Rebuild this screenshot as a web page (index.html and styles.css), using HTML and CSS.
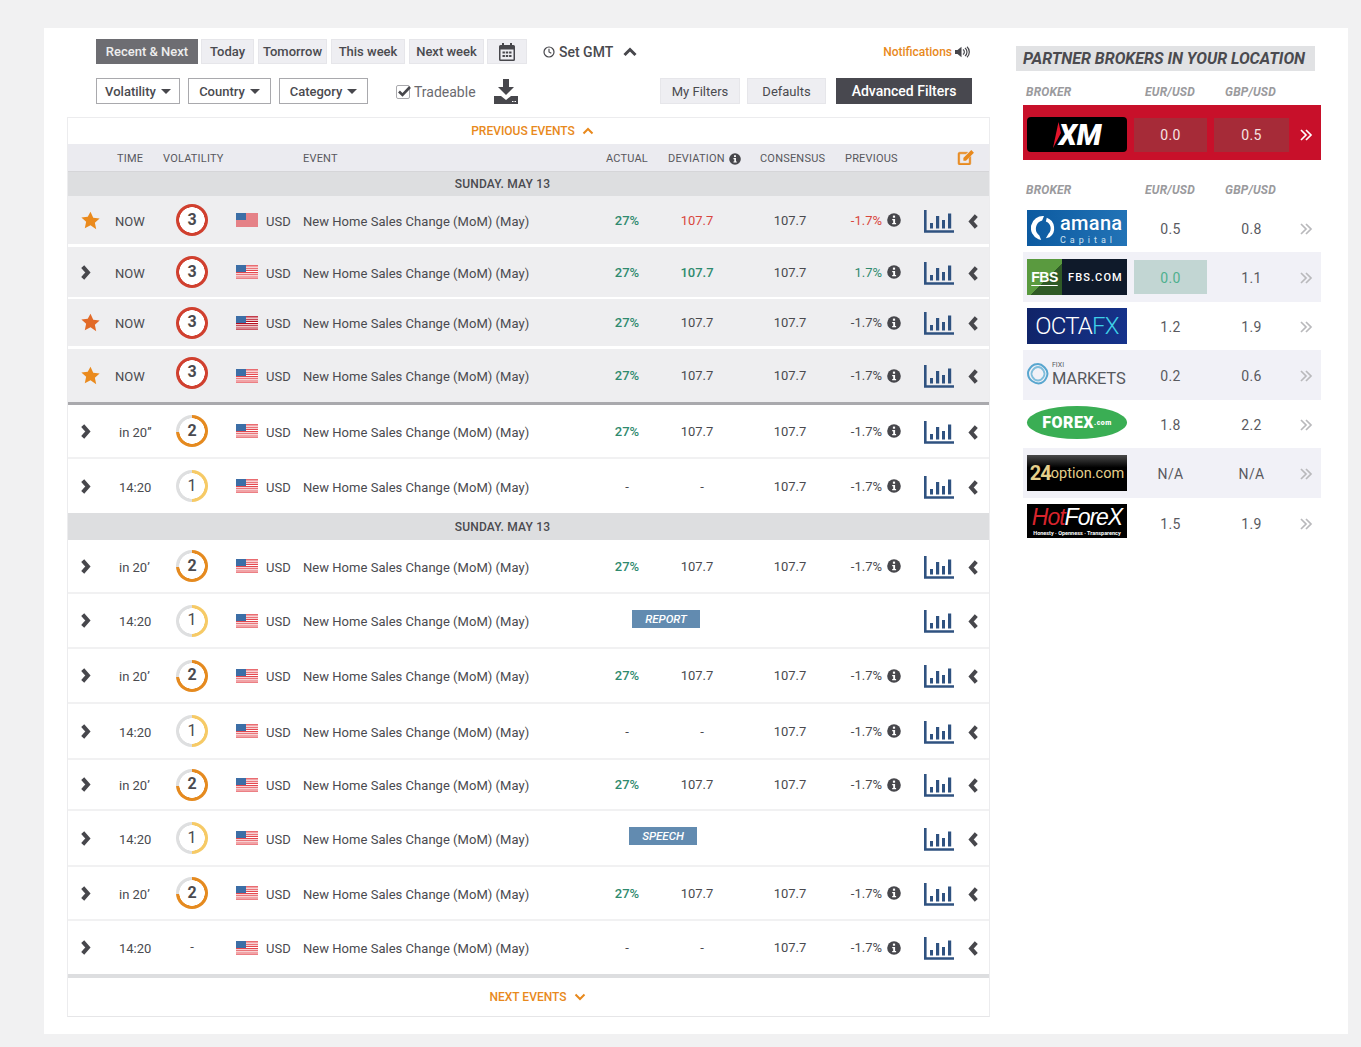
FILE: index.html
```html
<!DOCTYPE html>
<html lang="en">
<head>
    <meta charset="UTF-8">
    <meta name="viewport" content="width=device-width, initial-scale=1.0">
    <title>Economic Calendar</title>
    <link rel="stylesheet" href="styles.css">
</head>
<body>
    <svg class="sprites" aria-hidden="true">
        <symbol id="star" viewBox="0 0 20 20"><path d="M10 .8l2.9 6.2 6.7.8-5 4.6 1.4 6.7L10 15l-6 3.1 1.4-6.7-5-4.6 6.7-.8z"/></symbol>
        <symbol id="next" viewBox="0 0 10 14"><path d="M2.400 1.600L7.200 7l-4.800 5.400" fill="none" stroke="currentColor" stroke-width="3.800"/></symbol>
        <symbol id="back" viewBox="0 0 10 14"><path d="M7.600 1.600L2.800 7l4.800 5.400" fill="none" stroke="currentColor" stroke-width="3.800"/></symbol>
        <symbol id="flag" viewBox="0 0 22 14">
            <rect width="22" height="14" fill="#fff"/>
            <path d="M0 1h22M0 3.200h22M0 5.400h22M0 7.600h22M0 9.800h22M0 12h22" stroke="currentColor" stroke-width="1.100"/>
            <rect y="0" width="22" height=".6" fill="currentColor"/>
            <rect y="13.300" width="22" height=".7" fill="currentColor"/>
            <rect width="10" height="7" fill="#3c6ea6"/>
        </symbol>
        <symbol id="flag-flat" viewBox="0 0 22 14">
            <rect width="22" height="14" fill="#e58187"/>
            <rect width="10" height="7" fill="#3c6ea6"/>
        </symbol>
        <symbol id="info" viewBox="0 0 14 14">
            <circle cx="7" cy="7" r="6.800" fill="#47474c"/>
            <rect x="5.900" y="2.600" width="2.200" height="2.100" fill="#fff"/>
            <path d="M5.200 5.900h2.900v4h1v1.300H5.200V9.900h1V7.200h-1z" fill="#fff"/>
        </symbol>
        <symbol id="chart" viewBox="0 0 30 23">
            <path d="M1.300 0v21.500h28.700" fill="none" stroke="currentColor" stroke-width="2.600"/>
            <rect x="6" y="13" width="3" height="5.500" fill="currentColor"/>
            <rect x="12" y="6" width="3.200" height="12.500" fill="currentColor"/>
            <rect x="18" y="10" width="3" height="8.500" fill="currentColor"/>
            <rect x="24" y="3.500" width="3.200" height="15" fill="currentColor"/>
        </symbol>
        <symbol id="more" viewBox="0 0 14 14">
            <path d="M2 2l5 5-5 5M7 2l5 5-5 5" fill="none" stroke="currentColor" stroke-width="1.700"/>
        </symbol>
    </svg>

    <div class="panel">
        <main class="calendar">
            <div class="toolbar toolbar-top">
                <a class="tab tab-recent active">Recent &amp; Next</a>
                <a class="tab tab-today">Today</a>
                <a class="tab tab-tomorrow">Tomorrow</a>
                <a class="tab tab-thisweek">This week</a>
                <a class="tab tab-nextweek">Next week</a>
                <a class="tab tab-date">
                    <svg class="icon-cal" viewBox="0 0 18 20">
                        <path d="M1 4.500a1.500 1.500 0 0 1 1.500-1.500H4V1h2v2h6V1h2v2h1.500A1.500 1.500 0 0 1 17 4.500v13a1.500 1.500 0 0 1-1.500 1.500h-13A1.500 1.500 0 0 1 1 17.500zM2.500 7.500v10h13v-10z" fill="#47474c" fill-rule="evenodd"/>
                        <path d="M4.500 9.500h2.400v2H4.500zM7.800 9.500h2.400v2H7.800zM11.100 9.500h2.400v2h-2.400zM4.500 13h2.400v2H4.500zM7.800 13h2.400v2H7.800zM11.100 13h2.400v2h-2.400z" fill="#47474c"/>
                    </svg>
                </a>
                <span class="gmt">
                    <svg class="icon-clock" viewBox="0 0 12 12"><circle cx="6" cy="6" r="5" fill="none" stroke="#47474c" stroke-width="1.200"/><path d="M6 2.800V6l2.300 1.300" fill="none" stroke="#47474c" stroke-width="1.100"/></svg>
                    Set GMT
                    <svg class="icon-up" viewBox="0 0 14 10"><path d="M1.500 8L7 2.500 12.500 8" fill="none" stroke="#47474c" stroke-width="3"/></svg>
                </span>
                <a class="notify">Notifications
                    <svg class="icon-sound" viewBox="0 0 15 12">
                        <path d="M0 4h2.500L6.500.8v10.400L2.500 8H0z" fill="#47474c"/>
                        <path d="M8 3.500a3 3 0 0 1 0 5M10 2a5 5 0 0 1 0 8M12 .8a7 7 0 0 1 0 10.400" fill="none" stroke="#47474c" stroke-width="1.200"/>
                    </svg>
                </a>
            </div>

            <div class="toolbar toolbar-filters">
                <a class="drop drop-vol">Volatility<i class="caret"></i></a>
                <a class="drop drop-country">Country<i class="caret"></i></a>
                <a class="drop drop-cat">Category<i class="caret"></i></a>
                <label class="tradeable">
                    <svg class="icon-check" viewBox="0 0 16 15">
                        <rect x=".5" y="1.500" width="13" height="13" rx="1.500" fill="#fff" stroke="#a9a9ad"/>
                        <path d="M3 7.500l3.500 3.500L14 3" fill="none" stroke="#47474c" stroke-width="2.600"/>
                    </svg>
                    <span>Tradeable</span>
                </label>
                <svg class="icon-download" viewBox="0 0 24 25">
                    <path d="M9 0h6v8h5l-8 8-8-8h5z" fill="#47474c"/>
                    <path d="M0 17h7l5 4 5-4h7v8H0z" fill="#47474c"/>
                    <path d="M18 22h1.500v1H18zM20.500 22H22v1h-1.500z" fill="#fff"/>
                </svg>
                <a class="btn btn-myfilters">My Filters</a>
                <a class="btn btn-defaults">Defaults</a>
                <a class="btn btn-advanced">Advanced Filters</a>
            </div>

            <section class="events">
                <a class="pager pager-prev">PREVIOUS EVENTS
                    <svg class="icon-pager" viewBox="0 0 12 8"><path d="M1.500 6.500L6 2l4.500 4.500" fill="none" stroke="currentColor" stroke-width="2"/></svg>
                </a>

                <div class="row head">
                    <span class="head-time">TIME</span>
                    <span class="head-vol">VOLATILITY</span>
                    <span class="head-event">EVENT</span>
                    <span class="head-actual">ACTUAL</span>
                    <span class="head-dev">DEVIATION <svg class="info-small"><use href="#info"/></svg></span>
                    <span class="head-cons">CONSENSUS</span>
                    <span class="head-prev">PREVIOUS</span>
                    <svg class="head-edit" viewBox="0 0 17 15">
                        <path d="M1 4.500A1.500 1.500 0 0 1 2.500 3H10L8.500 4.500H2.500v9h9V8.500L13 7v6.500a1.500 1.500 0 0 1-1.500 1.500h-9A1.500 1.500 0 0 1 1 13.500z" fill="currentColor" stroke="currentColor" stroke-width=".5"/>
                        <path d="M6 8.500L13.500 1l2.500 2.500L8.500 11H6z" fill="currentColor"/>
                    </svg>
                </div>

                <div class="date">SUNDAY. MAY 13</div>

                <div class="row row-now">
                    <span class="c-mark"><svg class="star"><use href="#star"/></svg></span>
                    <span class="c-time">NOW</span>
                    <span class="c-vol"><b class="ring ring-3">3</b></span>
                    <span class="c-flag"><svg class="flag flag-pale"><use href="#flag-flat"/></svg></span>
                    <span class="c-cur">USD</span>
                    <span class="c-event">New Home Sales Change (MoM) (May)</span>
                    <span class="c-val up">27%</span>
                    <span class="c-val down">107.7</span>
                    <span class="c-val">107.7</span>
                    <span class="c-prev down">-1.7%</span>
                    <span class="c-info"><svg class="info"><use href="#info"/></svg></span>
                    <span class="c-chart"><svg class="chart"><use href="#chart"/></svg></span>
                    <span class="c-back"><svg class="back"><use href="#back"/></svg></span>
                </div>
                <div class="row row-now row-thin">
                    <span class="c-mark"><svg class="next"><use href="#next"/></svg></span>
                    <span class="c-time">NOW</span>
                    <span class="c-vol"><b class="ring ring-3">3</b></span>
                    <span class="c-flag"><svg class="flag"><use href="#flag"/></svg></span>
                    <span class="c-cur">USD</span>
                    <span class="c-event">New Home Sales Change (MoM) (May)</span>
                    <span class="c-val up">27%</span>
                    <span class="c-val up">107.7</span>
                    <span class="c-val">107.7</span>
                    <span class="c-prev up">1.7%</span>
                    <span class="c-info"><svg class="info"><use href="#info"/></svg></span>
                    <span class="c-chart"><svg class="chart"><use href="#chart"/></svg></span>
                    <span class="c-back"><svg class="back"><use href="#back"/></svg></span>
                </div>
                <div class="row row-now">
                    <span class="c-mark"><svg class="star star-hot"><use href="#star"/></svg></span>
                    <span class="c-time">NOW</span>
                    <span class="c-vol"><b class="ring ring-3">3</b></span>
                    <span class="c-flag"><svg class="flag flag-dark"><use href="#flag"/></svg></span>
                    <span class="c-cur">USD</span>
                    <span class="c-event">New Home Sales Change (MoM) (May)</span>
                    <span class="c-val up">27%</span>
                    <span class="c-val">107.7</span>
                    <span class="c-val">107.7</span>
                    <span class="c-prev">-1.7%</span>
                    <span class="c-info"><svg class="info"><use href="#info"/></svg></span>
                    <span class="c-chart"><svg class="chart"><use href="#chart"/></svg></span>
                    <span class="c-back"><svg class="back"><use href="#back"/></svg></span>
                </div>
                <div class="row row-now row-divider">
                    <span class="c-mark"><svg class="star"><use href="#star"/></svg></span>
                    <span class="c-time">NOW</span>
                    <span class="c-vol"><b class="ring ring-3 ring-lift">3</b></span>
                    <span class="c-flag"><svg class="flag"><use href="#flag"/></svg></span>
                    <span class="c-cur">USD</span>
                    <span class="c-event">New Home Sales Change (MoM) (May)</span>
                    <span class="c-val up">27%</span>
                    <span class="c-val">107.7</span>
                    <span class="c-val">107.7</span>
                    <span class="c-prev">-1.7%</span>
                    <span class="c-info"><svg class="info"><use href="#info"/></svg></span>
                    <span class="c-chart"><svg class="chart"><use href="#chart"/></svg></span>
                    <span class="c-back"><svg class="back"><use href="#back"/></svg></span>
                </div>
                <div class="row">
                    <span class="c-mark"><svg class="next"><use href="#next"/></svg></span>
                    <span class="c-time c-soon">in 20’’</span>
                    <span class="c-vol"><b class="ring ring-2">2</b></span>
                    <span class="c-flag"><svg class="flag"><use href="#flag"/></svg></span>
                    <span class="c-cur">USD</span>
                    <span class="c-event">New Home Sales Change (MoM) (May)</span>
                    <span class="c-val up">27%</span>
                    <span class="c-val">107.7</span>
                    <span class="c-val">107.7</span>
                    <span class="c-prev">-1.7%</span>
                    <span class="c-info"><svg class="info"><use href="#info"/></svg></span>
                    <span class="c-chart"><svg class="chart"><use href="#chart"/></svg></span>
                    <span class="c-back"><svg class="back"><use href="#back"/></svg></span>
                </div>
                <div class="row row-flush">
                    <span class="c-mark"><svg class="next"><use href="#next"/></svg></span>
                    <span class="c-time c-soon">14:20</span>
                    <span class="c-vol"><b class="ring ring-1">1</b></span>
                    <span class="c-flag"><svg class="flag"><use href="#flag"/></svg></span>
                    <span class="c-cur">USD</span>
                    <span class="c-event">New Home Sales Change (MoM) (May)</span>
                    <span class="c-val">-</span>
                    <span class="c-val c-dash">-</span>
                    <span class="c-val">107.7</span>
                    <span class="c-prev">-1.7%</span>
                    <span class="c-info"><svg class="info"><use href="#info"/></svg></span>
                    <span class="c-chart"><svg class="chart"><use href="#chart"/></svg></span>
                    <span class="c-back"><svg class="back"><use href="#back"/></svg></span>
                </div>

                <div class="date date-low">SUNDAY. MAY 13</div>

                <div class="row">
                    <span class="c-mark"><svg class="next"><use href="#next"/></svg></span>
                    <span class="c-time c-soon">in 20’</span>
                    <span class="c-vol"><b class="ring ring-2">2</b></span>
                    <span class="c-flag"><svg class="flag"><use href="#flag"/></svg></span>
                    <span class="c-cur">USD</span>
                    <span class="c-event">New Home Sales Change (MoM) (May)</span>
                    <span class="c-val up">27%</span>
                    <span class="c-val">107.7</span>
                    <span class="c-val">107.7</span>
                    <span class="c-prev">-1.7%</span>
                    <span class="c-info"><svg class="info"><use href="#info"/></svg></span>
                    <span class="c-chart"><svg class="chart"><use href="#chart"/></svg></span>
                    <span class="c-back"><svg class="back"><use href="#back"/></svg></span>
                </div>
                <div class="row">
                    <span class="c-mark"><svg class="next"><use href="#next"/></svg></span>
                    <span class="c-time c-soon">14:20</span>
                    <span class="c-vol"><b class="ring ring-1">1</b></span>
                    <span class="c-flag"><svg class="flag"><use href="#flag"/></svg></span>
                    <span class="c-cur">USD</span>
                    <span class="c-event">New Home Sales Change (MoM) (May)</span>
                    <span class="c-badge"><em class="badge badge-report">REPORT</em></span>
                    <span class="c-chart"><svg class="chart"><use href="#chart"/></svg></span>
                    <span class="c-back"><svg class="back"><use href="#back"/></svg></span>
                </div>
                <div class="row">
                    <span class="c-mark"><svg class="next"><use href="#next"/></svg></span>
                    <span class="c-time c-soon">in 20’</span>
                    <span class="c-vol"><b class="ring ring-2">2</b></span>
                    <span class="c-flag"><svg class="flag"><use href="#flag"/></svg></span>
                    <span class="c-cur">USD</span>
                    <span class="c-event">New Home Sales Change (MoM) (May)</span>
                    <span class="c-val up">27%</span>
                    <span class="c-val">107.7</span>
                    <span class="c-val">107.7</span>
                    <span class="c-prev">-1.7%</span>
                    <span class="c-info"><svg class="info"><use href="#info"/></svg></span>
                    <span class="c-chart"><svg class="chart"><use href="#chart"/></svg></span>
                    <span class="c-back"><svg class="back"><use href="#back"/></svg></span>
                </div>
                <div class="row">
                    <span class="c-mark"><svg class="next"><use href="#next"/></svg></span>
                    <span class="c-time c-soon">14:20</span>
                    <span class="c-vol"><b class="ring ring-1">1</b></span>
                    <span class="c-flag"><svg class="flag"><use href="#flag"/></svg></span>
                    <span class="c-cur">USD</span>
                    <span class="c-event">New Home Sales Change (MoM) (May)</span>
                    <span class="c-val">-</span>
                    <span class="c-val c-dash">-</span>
                    <span class="c-val">107.7</span>
                    <span class="c-prev">-1.7%</span>
                    <span class="c-info"><svg class="info"><use href="#info"/></svg></span>
                    <span class="c-chart"><svg class="chart"><use href="#chart"/></svg></span>
                    <span class="c-back"><svg class="back"><use href="#back"/></svg></span>
                </div>
                <div class="row">
                    <span class="c-mark"><svg class="next"><use href="#next"/></svg></span>
                    <span class="c-time c-soon">in 20’</span>
                    <span class="c-vol"><b class="ring ring-2">2</b></span>
                    <span class="c-flag"><svg class="flag"><use href="#flag"/></svg></span>
                    <span class="c-cur">USD</span>
                    <span class="c-event">New Home Sales Change (MoM) (May)</span>
                    <span class="c-val up">27%</span>
                    <span class="c-val">107.7</span>
                    <span class="c-val">107.7</span>
                    <span class="c-prev">-1.7%</span>
                    <span class="c-info"><svg class="info"><use href="#info"/></svg></span>
                    <span class="c-chart"><svg class="chart"><use href="#chart"/></svg></span>
                    <span class="c-back"><svg class="back"><use href="#back"/></svg></span>
                </div>
                <div class="row">
                    <span class="c-mark"><svg class="next"><use href="#next"/></svg></span>
                    <span class="c-time c-soon">14:20</span>
                    <span class="c-vol"><b class="ring ring-1">1</b></span>
                    <span class="c-flag"><svg class="flag"><use href="#flag"/></svg></span>
                    <span class="c-cur">USD</span>
                    <span class="c-event">New Home Sales Change (MoM) (May)</span>
                    <span class="c-badge"><em class="badge badge-speech">SPEECH</em></span>
                    <span class="c-chart"><svg class="chart"><use href="#chart"/></svg></span>
                    <span class="c-back"><svg class="back"><use href="#back"/></svg></span>
                </div>
                <div class="row">
                    <span class="c-mark"><svg class="next"><use href="#next"/></svg></span>
                    <span class="c-time c-soon">in 20’</span>
                    <span class="c-vol"><b class="ring ring-2">2</b></span>
                    <span class="c-flag"><svg class="flag"><use href="#flag"/></svg></span>
                    <span class="c-cur">USD</span>
                    <span class="c-event">New Home Sales Change (MoM) (May)</span>
                    <span class="c-val up">27%</span>
                    <span class="c-val">107.7</span>
                    <span class="c-val">107.7</span>
                    <span class="c-prev">-1.7%</span>
                    <span class="c-info"><svg class="info"><use href="#info"/></svg></span>
                    <span class="c-chart"><svg class="chart"><use href="#chart"/></svg></span>
                    <span class="c-back"><svg class="back"><use href="#back"/></svg></span>
                </div>
                <div class="row row-end">
                    <span class="c-mark"><svg class="next"><use href="#next"/></svg></span>
                    <span class="c-time c-soon">14:20</span>
                    <span class="c-vol c-none">-</span>
                    <span class="c-flag"><svg class="flag"><use href="#flag"/></svg></span>
                    <span class="c-cur">USD</span>
                    <span class="c-event">New Home Sales Change (MoM) (May)</span>
                    <span class="c-val">-</span>
                    <span class="c-val c-dash">-</span>
                    <span class="c-val">107.7</span>
                    <span class="c-prev">-1.7%</span>
                    <span class="c-info"><svg class="info"><use href="#info"/></svg></span>
                    <span class="c-chart"><svg class="chart"><use href="#chart"/></svg></span>
                    <span class="c-back"><svg class="back"><use href="#back"/></svg></span>
                </div>

                <a class="pager pager-next">NEXT EVENTS
                    <svg class="icon-pager" viewBox="0 0 12 8"><path d="M1.500 1.500L6 6l4.500-4.500" fill="none" stroke="currentColor" stroke-width="2"/></svg>
                </a>
            </section>
        </main>

        <aside class="brokers">
            <h2 class="brokers-title">PARTNER BROKERS IN YOUR LOCATION</h2>

            <div class="broker-head">
                <span>BROKER</span><span class="center">EUR/USD</span><span class="center">GBP/USD</span>
            </div>
            <div class="broker broker-top">
                <div class="logo logo-xm">
                    <svg class="xm-mark" viewBox="0 0 8 26"><path d="M5.500 0L8 11 0 26z" fill="#e4152b"/></svg>
                    <span>XM</span>
                </div>
                <span class="quote quote-box">0.0</span>
                <span class="quote quote-box">0.5</span>
                <svg class="more"><use href="#more"/></svg>
            </div>

            <div class="broker-head broker-head-low">
                <span>BROKER</span><span class="center">EUR/USD</span><span class="center">GBP/USD</span>
            </div>
            <div class="broker-list">
                <div class="broker">
                    <div class="logo logo-amana">
                        <svg class="amana-mark" viewBox="0 0 28 30">
                            <path d="M14 2A13 13 0 0 0 8 27l3 1-2-5A9 9 0 0 1 12 7z" fill="#fff"/>
                            <path d="M17 4a12 12 0 0 1 3 21l-4 1 3-5a8 8 0 0 0-3-13z" fill="#fff"/>
                        </svg>
                        <span class="amana-text"><b>amana</b><i>Capital</i></span>
                    </div>
                    <span class="quote">0.5</span>
                    <span class="quote">0.8</span>
                    <svg class="more"><use href="#more"/></svg>
                </div>
                <div class="broker">
                    <div class="logo logo-fbs"><b>FBS</b><span>FBS.COM</span></div>
                    <span class="quote quote-best">0.0</span>
                    <span class="quote">1.1</span>
                    <svg class="more"><use href="#more"/></svg>
                </div>
                <div class="broker">
                    <div class="logo logo-octa">OCTA<span>FX</span></div>
                    <span class="quote">1.2</span>
                    <span class="quote">1.9</span>
                    <svg class="more"><use href="#more"/></svg>
                </div>
                <div class="broker">
                    <div class="logo logo-fixi">
                        <svg class="fixi-mark" viewBox="0 0 22 22">
                            <path d="M11 1c4 0 5 2 7 4s3 5 2 8-3 6-6 7-6 0-9-2-4-5-4-8 2-5 4-7 3-2 6-2z" fill="none" stroke="#58a6cf" stroke-width="2"/>
                            <path d="M11 4c3 0 4 1 5.500 3.500s1 5 0 6.500-3 3.500-5.500 3.500-4-1-5.500-3.500-1-5 0-6.500 2.500-3.500 5.500-3.500z" fill="none" stroke="#7fbddb" stroke-width="1.800"/>
                        </svg>
                        <span class="fixi-text"><i>FIXI</i><b>MARKETS</b></span>
                    </div>
                    <span class="quote">0.2</span>
                    <span class="quote">0.6</span>
                    <svg class="more"><use href="#more"/></svg>
                </div>
                <div class="broker">
                    <div class="logo logo-forex">FOREX<span>.com</span></div>
                    <span class="quote">1.8</span>
                    <span class="quote">2.2</span>
                    <svg class="more"><use href="#more"/></svg>
                </div>
                <div class="broker">
                    <div class="logo logo-24"><b>24</b>option.com</div>
                    <span class="quote">N/A</span>
                    <span class="quote">N/A</span>
                    <svg class="more"><use href="#more"/></svg>
                </div>
                <div class="broker">
                    <div class="logo logo-hot">
                        <span class="hot-name"><b>Hot</b>ForeX</span>
                        <span class="hot-tag">Honesty · Openness · Transparency</span>
                    </div>
                    <span class="quote">1.5</span>
                    <span class="quote">1.9</span>
                    <svg class="more"><use href="#more"/></svg>
                </div>
            </div>
        </aside>
    </div>
</body>
</html>
```

FILE: styles.css
```css
* {
    box-sizing: border-box;
}

body {
    margin: 0;
    height: 1047px;
    overflow: hidden;
    background-color: #f1f1f2;
    font-family: Roboto, "Liberation Sans", sans-serif;
    font-size: 13px;
    color: #4a4a4f;
}

.sprites {
    display: none;
}

.panel {
    display: flex;
    width: 1304px;
    height: 1006px;
    margin: 28px 0 0 44px;
    background-color: #fff;
}

.calendar {
    width: 923px;
    margin-left: 23px;
}

/* toolbars */
.toolbar {
    display: flex;
    align-items: center;
    padding: 0 18px 0 29px;
}

.toolbar-top {
    height: 25px;
    margin-top: 11px;
}

.toolbar-filters {
    height: 26px;
    margin-top: 14px;
}

.tab {
    display: flex;
    justify-content: center;
    align-items: center;
    height: 25px;
    margin-right: 4px;
    background-color: #eeeef2;
    border: 1px solid #e6e6ea;
    font-weight: 500;
    color: #4a4a4f;
}

.tab.active {
    background-color: #6d6d72;
    border-color: #6d6d72;
    color: #eeeeee;
}

.tab-recent { width: 102px; margin-right: 3px; }
.tab-today { width: 53px; }
.tab-tomorrow { width: 69px; }
.tab-thisweek { width: 74px; }
.tab-nextweek { width: 75px; margin-right: 3px; }
.tab-date { width: 40px; }

.icon-cal {
    width: 18px;
    height: 20px;
}

.gmt {
    display: flex;
    align-items: center;
    margin-left: 12px;
    font-size: 14px;
    font-weight: 500;
}

.icon-clock {
    width: 12px;
    height: 12px;
    margin-right: 4px;
}

.icon-up {
    width: 14px;
    height: 10px;
    margin-left: 10px;
}

.notify {
    display: flex;
    align-items: center;
    margin: 0 2px 0 auto;
    font-size: 12px;
    font-weight: 500;
    color: #e8891c;
}

.icon-sound {
    width: 15px;
    height: 12px;
    margin-left: 3px;
}

.drop {
    display: flex;
    justify-content: center;
    align-items: center;
    height: 26px;
    margin-right: 8px;
    border: 1px solid #a9a9ad;
    font-weight: 500;
}

.drop-vol { width: 84px; }
.drop-country { width: 83px; }
.drop-cat { width: 89px; }

.caret {
    width: 0;
    height: 0;
    margin-left: 5px;
    border-left: 5px solid transparent;
    border-right: 5px solid transparent;
    border-top: 5px solid #47474c;
}

.tradeable {
    display: flex;
    align-items: center;
    margin-left: 20px;
    font-size: 14px;
    color: #6a6a6f;
}

.tradeable span {
    padding-top: 2px;
}

.icon-check {
    width: 16px;
    height: 15px;
    margin-right: 2px;
}

.icon-download {
    width: 24px;
    height: 25px;
    margin-left: 18px;
}

.btn {
    display: flex;
    justify-content: center;
    align-items: center;
    height: 26px;
    background-color: #eeeef2;
    border: 1px solid #e6e6ea;
}

.btn-myfilters {
    width: 80px;
    margin-left: auto;
}

.btn-defaults {
    width: 79px;
    margin-left: 7px;
}

.btn-advanced {
    width: 136px;
    margin-left: 10px;
    background-color: #48484f;
    border-color: #48484f;
    font-size: 14px;
    font-weight: 500;
    color: #fff;
}

/* events table */
.events {
    display: grid;
    grid-template-rows: 27px 28px 24px 51px 52px 50px 56px 54px 54px 27px 54px 55px 55px 56px 51px 56px 54px 57px 38px;
    margin-top: 13px;
    border-left: 1px solid #ececee;
    border-right: 1px solid #ececee;
    border-bottom: 1px solid #e6e6e8;
}

.pager {
    display: flex;
    justify-content: center;
    align-items: center;
    font-size: 12px;
    font-weight: 500;
    color: #e8891c;
}

.pager-prev {
    padding-left: 8px;
    border-top: 1px solid #ececee;
}

.pager-next {
    padding-left: 18px;
}

.icon-pager {
    width: 12px;
    height: 8px;
    margin-left: 7px;
}

.row {
    display: grid;
    grid-template-columns: 40px 56px 56px 46px 37px 293px 62px 78px 108px 40px 20px 58px 24px;
    align-items: center;
    background-color: #fff;
    border-bottom: 2px solid #f1f1f2;
}

.row-now {
    background-color: #eeeef0;
    border-bottom: 3px solid #fff;
}

.row-thin {
    border-bottom-width: 2px;
}

.row-divider {
    border-bottom: 3px solid #a9a9ad;
}

.row-flush {
    border-bottom: none;
}

.row-end {
    border-bottom: 4px solid #dddee0;
}

.head {
    position: relative;
    padding-top: 2px;
    background-color: #ebebf0;
    border-bottom: 1px solid #d5d5d8;
    font-size: 11px;
    letter-spacing: .2px;
    color: #58585d;
}

.head-time { grid-column: 2; padding-left: 9px; }
.head-vol { grid-column: 3 / span 2; margin-left: -1px; white-space: nowrap; }
.head-event { grid-column: 6; }
.head-actual { grid-column: 7; padding-left: 10px; white-space: nowrap; }
.head-dev { grid-column: 8; padding-left: 10px; white-space: nowrap; display: flex; align-items: center; gap: 4px; }
.head-cons { grid-column: 9; padding-left: 24px; }
.head-prev { grid-column: 10 / span 2; padding-left: 1px; }

.head-edit {
    position: absolute;
    left: 889px;
    top: 5px;
    width: 18px;
    height: 16px;
    color: #e8891c;
}

.info-small {
    flex: none;
    width: 12px;
    height: 12px;
}

.date {
    display: flex;
    justify-content: center;
    align-items: center;
    padding-right: 52px;
    background-color: #dddee0;
    font-size: 12px;
    font-weight: 500;
    letter-spacing: .2px;
}

.date-low {
    padding-top: 1px;
}

.c-mark {
    display: flex;
    justify-content: center;
    padding-left: 2px;
}

.star {
    width: 19px;
    height: 19px;
    margin-left: 3px;
    fill: #ea8a1d;
}

.star-hot {
    fill: #e26a28;
}

.next {
    width: 11px;
    height: 15px;
    margin-right: 8px;
    color: #47474c;
}

.c-time {
    padding-left: 7px;
    white-space: nowrap;
}

.c-soon {
    padding-left: 11px;
}

.c-vol {
    display: flex;
    justify-content: center;
}

.c-none {
    padding-bottom: 2px;
}

.ring {
    display: flex;
    justify-content: center;
    align-items: center;
    width: 32px;
    height: 32px;
    padding-bottom: 1px;
    border-radius: 50%;
    font-size: 16px;
    font-weight: 700;
    line-height: 1;
}

.ring-lift {
    margin-bottom: 6px;
}

.ring-3 {
    background: radial-gradient(circle closest-side, #fff 12.5px, transparent 13px), #d0402f;
}

.ring-2 {
    background: radial-gradient(circle closest-side, #fff 12.5px, transparent 13px), conic-gradient(#e58a1f 0 74%, #dedfe0 74% 100%);
}

.ring-1 {
    font-weight: 400;
    background: radial-gradient(circle closest-side, #fff 12.5px, transparent 13px), conic-gradient(#f6ca66 0 50%, #dedfe0 50% 100%);
}

.c-flag {
    display: flex;
    padding-left: 16px;
}

.flag {
    width: 22px;
    height: 14px;
    color: #e4484f;
}

.flag-dark {
    color: #b30d1f;
}

.c-event,
.c-cur,
.c-time {
    padding-top: 2px;
}

.c-event {
    white-space: nowrap;
    letter-spacing: .03px;
}

.c-val {
    text-align: center;
}

.c-dash {
    padding-left: 10px;
}

.c-prev {
    padding-right: 2px;
    text-align: right;
}

.up {
    font-weight: 500;
    color: #2f8a6e;
}

.down {
    color: #d9463e;
}

.c-prev.up {
    font-weight: 400;
}

.c-val.down {
    font-weight: 400;
}

.c-info {
    display: flex;
    justify-content: center;
}

.info {
    width: 14px;
    height: 14px;
}

.c-chart {
    display: flex;
    padding-left: 20px;
}

.chart {
    width: 30px;
    height: 23px;
    margin-top: 2px;
    color: #2f5280;
}

.c-back {
    display: flex;
    justify-content: center;
}

.back {
    width: 11px;
    height: 15px;
    margin: 2px 2px 0 0;
    color: #47474c;
}

.c-badge {
    grid-column: 7 / span 5;
    padding-bottom: 4px;
}

.badge {
    display: flex;
    justify-content: center;
    align-items: center;
    width: 68px;
    height: 18px;
    background-color: #628bb0;
    font-size: 11.500px;
    font-weight: 500;
    font-style: italic;
    color: #fff;
}

.badge-report {
    margin-left: 36px;
}

.badge-speech {
    margin-left: 33px;
}

/* brokers column */
.brokers {
    width: 305px;
    margin-left: 26px;
    padding-top: 18px;
}

.brokers-title {
    display: flex;
    align-items: center;
    width: 299px;
    height: 25px;
    margin: 0;
    padding-left: 7px;
    background-color: #e1e2e4;
    font-size: 16px;
    font-weight: 700;
    font-style: italic;
    white-space: nowrap;
}

.broker-head {
    display: grid;
    grid-template-columns: 104px 80px 81px;
    width: 298px;
    height: 34px;
    margin-left: 7px;
    padding: 14px 0 0 3px;
    font-size: 12px;
    font-weight: 700;
    font-style: italic;
    letter-spacing: .2px;
    color: #9a9a9d;
}

.broker-head-low {
    height: 43px;
    padding-top: 23px;
}

.broker-head .center {
    text-align: center;
}

.broker {
    display: grid;
    grid-template-columns: 100px 73px 75px 32px;
    column-gap: 7px;
    align-items: center;
    width: 298px;
    margin-left: 7px;
    padding-left: 4px;
    font-size: 14px;
}

.broker-top {
    height: 55px;
    padding-top: 4px;
    background-color: #c8102a;
    color: #fff;
}

.broker-list {
    display: grid;
    grid-template-rows: 49px 50px 48px 50px 48px 50px 49px;
}

.broker-list .broker:nth-child(even) {
    background-color: #f1f1f7;
}

.quote {
    display: flex;
    justify-content: center;
    align-items: center;
    height: 34px;
    letter-spacing: .3px;
    color: #5a5a5f;
}

.broker-list .quote {
    padding-top: 2px;
}

.quote-box {
    background-color: #a62b38;
    color: #f4e4e4;
}

.quote-best {
    background-color: #c2d6d3;
    color: #4fb08e;
}

.more {
    justify-self: center;
    width: 14px;
    height: 14px;
    margin-left: -12px;
    color: #b9b9bc;
}

.broker-list .more {
    margin-top: 2px;
}

.broker-top .more {
    color: #fff;
}

/* logos, drawn as boxes with real text */
.logo {
    display: flex;
    align-items: center;
    width: 100px;
    height: 36px;
    overflow: hidden;
    white-space: nowrap;
}

.logo-xm {
    justify-content: center;
    height: 35px;
    background-color: #000;
    border-radius: 4px;
    font-size: 29px;
    font-weight: 900;
    font-style: italic;
    letter-spacing: 0;
    color: #fff;
}

.xm-mark {
    width: 8px;
    height: 26px;
    margin-right: -2px;
}

.logo-amana {
    padding-left: 4px;
    background: linear-gradient(90deg, #0c5aa0, #2273b6);
    color: #fff;
}

.amana-mark {
    flex: none;
    width: 26px;
    height: 28px;
}

.amana-text {
    display: flex;
    flex-direction: column;
    margin-left: 3px;
}

.amana-text b {
    font-size: 20px;
    font-weight: 500;
    letter-spacing: .3px;
}

.amana-text i {
    font-size: 9px;
    font-style: normal;
    letter-spacing: 4px;
    color: #cfe2f2;
}

.logo-fbs {
    background-color: #0f1a2a;
    color: #fff;
}

.logo-fbs b {
    display: flex;
    justify-content: center;
    align-items: center;
    flex: none;
    width: 35px;
    height: 36px;
    background: linear-gradient(135deg, #5a9a3f 55%, #2f5a26 55%);
    font-family: "Liberation Sans", sans-serif;
    font-size: 14px;
    text-decoration: underline;
    text-underline-offset: 3px;
    letter-spacing: -.5px;
}

.logo-fbs span {
    margin-left: 6px;
    font-size: 11px;
    font-weight: 500;
    letter-spacing: 1.100px;
}

.logo-octa {
    justify-content: center;
    background: linear-gradient(100deg, #102468, #16338c);
    font-size: 24px;
    font-weight: 300;
    letter-spacing: -.8px;
    color: #fff;
}

.logo-octa span {
    color: #3fd0e8;
}

.logo-fixi {
    margin-bottom: 2px;
}

.fixi-mark {
    flex: none;
    width: 22px;
    height: 22px;
}

.fixi-text {
    display: flex;
    flex-direction: column;
    margin-left: 3px;
    color: #56595e;
}

.fixi-text i {
    font-size: 7px;
    font-style: normal;
}

.fixi-text b {
    font-size: 16.500px;
    font-weight: 400;
    letter-spacing: -.2px;
}

.logo-forex {
    justify-content: center;
    height: 33px;
    margin-bottom: 3px;
    background-color: #3aae54;
    border-radius: 50%;
    font-size: 16px;
    font-weight: 900;
    letter-spacing: .5px;
    color: #fff;
}

.logo-forex span {
    font-size: 7px;
}

.logo-24 {
    justify-content: center;
    background: linear-gradient(#4a4a4a, #000 35%);
    font-size: 14.500px;
    color: #e4cf8c;
}

.logo-24 b {
    font-size: 20px;
    letter-spacing: -1px;
}

.logo-hot {
    flex-direction: column;
    height: 34px;
    margin-bottom: 4px;
    background-color: #000;
    color: #fff;
}

.hot-name {
    font-family: "Liberation Sans", sans-serif;
    font-size: 23px;
    font-style: italic;
    line-height: 26px;
    letter-spacing: -1px;
}

.hot-name b {
    font-weight: 400;
    color: #d8242c;
}

.hot-tag {
    font-size: 5.500px;
    font-weight: 700;
    line-height: 7px;
}
```
